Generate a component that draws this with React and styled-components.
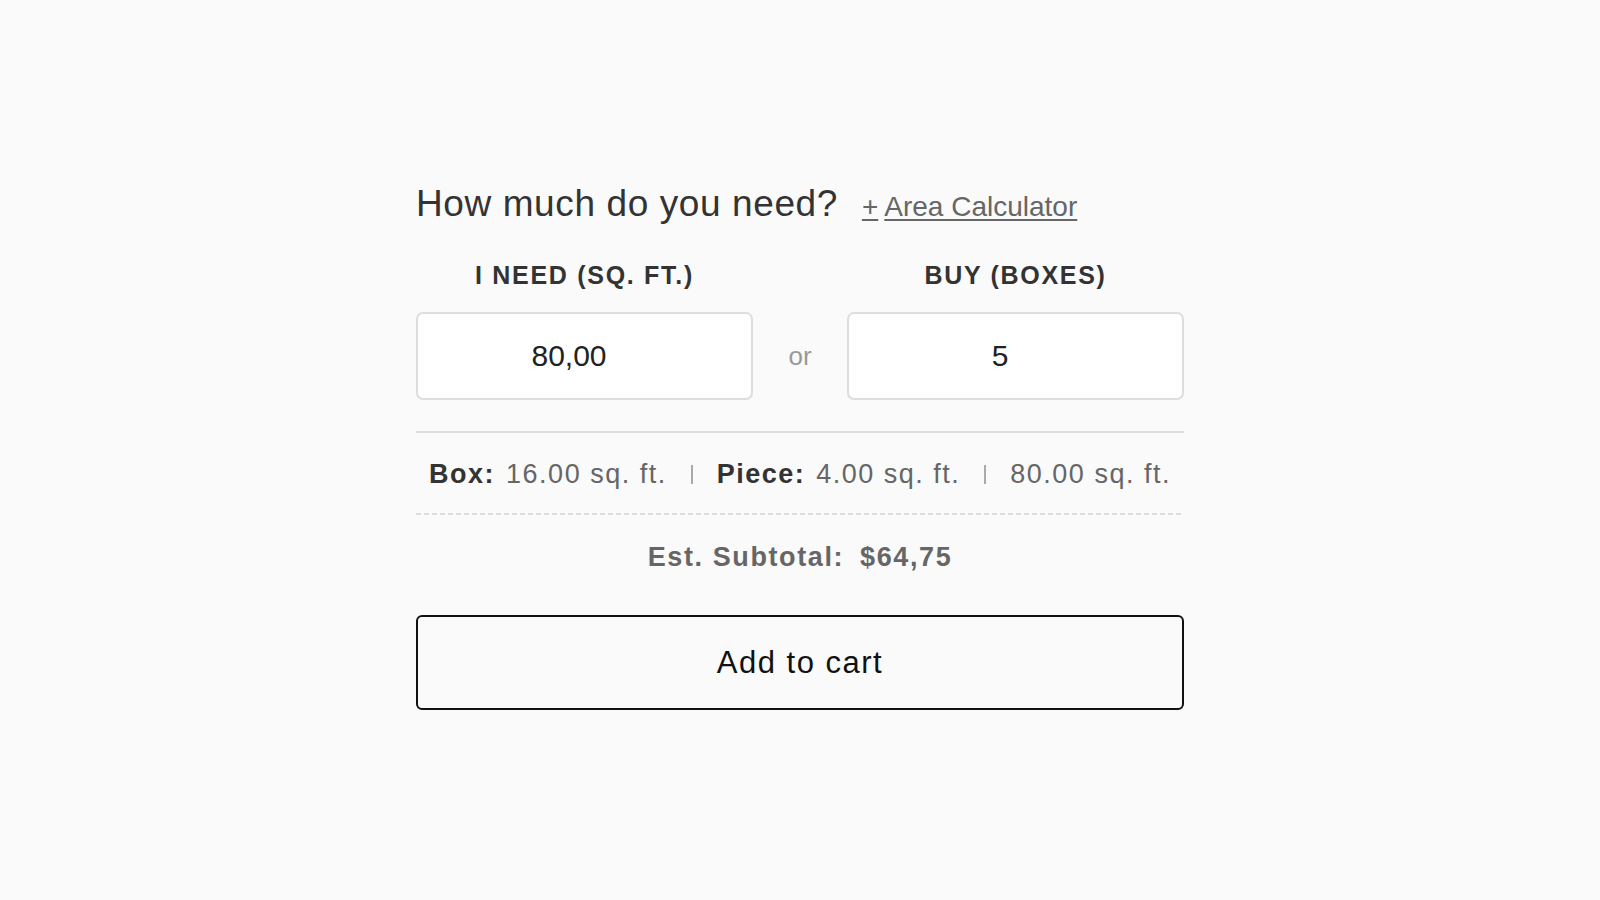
import styled, { createGlobalStyle } from "styled-components";

const GlobalStyle = createGlobalStyle`
  * {
    box-sizing: border-box;
  }

  body {
    margin: 0;
    background: #fafafa;
    font-family: "Liberation Sans", Arial, Helvetica, sans-serif;
    color: #333;
  }
`;

function App() {
  return (
    <>
      <GlobalStyle />
      <Page>
        <Calculator>
          <Header>
            <Title>How much do you need?</Title>
            <CalcLink href="#">
              <Plus>+</Plus>
              <span>Area Calculator</span>
            </CalcLink>
          </Header>

          <Fields>
            <Field>
              <FieldLabel>I need (sq. ft.)</FieldLabel>
              <QtyInput type="text" defaultValue="80,00" />
            </Field>
            <Or>or</Or>
            <Field>
              <FieldLabel>Buy (boxes)</FieldLabel>
              <QtyInput type="text" defaultValue="5" />
            </Field>
          </Fields>

          <Divider />

          <Specs>
            <Spec>
              <SpecLabel>Box:</SpecLabel>
              <SpecValue>16.00 sq. ft.</SpecValue>
            </Spec>
            <Sep />
            <Spec>
              <SpecLabel>Piece:</SpecLabel>
              <SpecValue>4.00 sq. ft.</SpecValue>
            </Spec>
            <Sep />
            <Spec>
              <SpecValue>80.00 sq. ft.</SpecValue>
            </Spec>
          </Specs>

          <DashedDivider />

          <Subtotal>
            Est. Subtotal:<Price>$64,75</Price>
          </Subtotal>

          <CartButton type="button">Add to cart</CartButton>
        </Calculator>
      </Page>
    </>
  );
}

const Page = styled.div`
  min-height: 100vh;
  display: flex;
  justify-content: center;
  padding-top: 182px;
`;

const Calculator = styled.div`
  width: 768px;
  display: flex;
  flex-direction: column;
`;

const Header = styled.div`
  display: flex;
  align-items: baseline;
  gap: 24px;
  height: 44px;
`;

const Title = styled.h2`
  margin: 0;
  font-size: 37px;
  line-height: 44px;
  font-weight: 400;
  letter-spacing: 0.6px;
  color: #333;
`;

const CalcLink = styled.a`
  display: flex;
  align-items: baseline;
  gap: 6px;
  font-size: 28px;
  color: #666;
  text-decoration: none;

  span {
    text-decoration: underline;
    text-underline-offset: 3px;
    text-decoration-thickness: 2px;
  }
`;

const Plus = styled.span``;

const Fields = styled.div`
  display: flex;
  align-items: flex-end;
  margin-top: 34px;
`;

const Field = styled.div`
  flex: 1;
  display: flex;
  flex-direction: column;
  align-items: center;
  gap: 22px;
`;

const FieldLabel = styled.label`
  font-size: 25px;
  line-height: 30px;
  font-weight: 700;
  letter-spacing: 1.7px;
  text-transform: uppercase;
  color: #333;
`;

const QtyInput = styled.input`
  width: 100%;
  height: 88px;
  padding: 0 31px 0 0;
  border: 2px solid #ddd;
  border-radius: 7px;
  background: #fff;
  font-family: inherit;
  font-size: 30px;
  color: #222;
  text-align: center;
  outline: none;
`;

const Or = styled.span`
  width: 94px;
  height: 88px;
  display: flex;
  align-items: center;
  justify-content: center;
  font-size: 26px;
  color: #999;
`;

const Divider = styled.hr`
  margin: 31px 0 0;
  border: 0;
  height: 2px;
  background: #ddd;
`;

const Specs = styled.div`
  display: flex;
  align-items: center;
  justify-content: center;
  margin-top: 25px;
  font-size: 27px;
  line-height: 32px;
  letter-spacing: 1.5px;
`;

const Spec = styled.div`
  display: flex;
  align-items: baseline;
  gap: 11px;
`;

const SpecLabel = styled.span`
  font-weight: 700;
  color: #333;
`;

const SpecValue = styled.span`
  color: #666;
`;

const Sep = styled.span`
  width: 2px;
  height: 19px;
  margin: 0 24px;
  background: #aaa;
`;

const DashedDivider = styled.div`
  margin-top: 23px;
  height: 2px;
  background: repeating-linear-gradient(
    to right,
    #ddd 0 5px,
    transparent 5px 8px
  );
`;

const Subtotal = styled.div`
  margin-top: 26px;
  text-align: center;
  font-size: 27px;
  line-height: 32px;
  font-weight: 700;
  letter-spacing: 1.6px;
  color: #666;
`;

const Price = styled.span`
  margin-left: 16px;
`;

const CartButton = styled.button`
  margin-top: 42px;
  height: 95px;
  border: 2px solid #111;
  border-radius: 6px;
  background: transparent;
  font-family: inherit;
  font-size: 31px;
  letter-spacing: 1.5px;
  color: #111;
  cursor: pointer;
`;

export default App;
